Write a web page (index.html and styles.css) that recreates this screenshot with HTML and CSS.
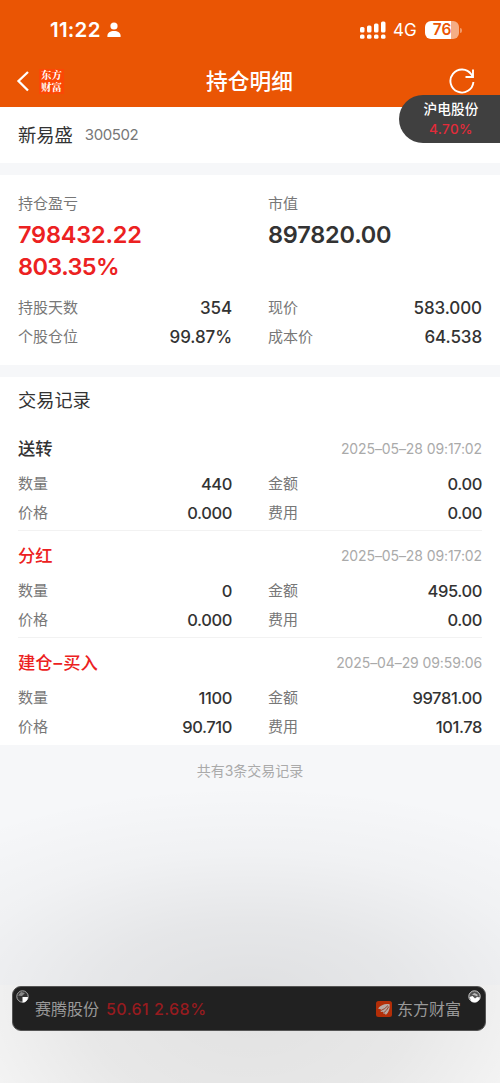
FILE: index.html
```html
<!DOCTYPE html>
<html lang="zh-CN">
<head>
<meta charset="utf-8">
<meta name="viewport" content="width=device-width, initial-scale=1">
<title>持仓明细</title>
<link rel="stylesheet" href="styles.css">
</head>
<body>
<div class="screen">
  <header class="header">
    <div class="status">
      <span class="time">11:22</span>
      <svg class="person" width="14" height="16" viewBox="0 0 14 16" fill="#fff"><circle cx="7" cy="4" r="3.6"/><path d="M.4 15v-1.3C.4 10.900 3.200 9 7 9s6.600 1.900 6.600 4.700V15z"/></svg>
      <svg class="signal" width="27" height="18" viewBox="0 0 27 18" fill="#fff"><rect x="0" y="6" width="4.500" height="5.500" rx="1.500"/><rect x="7" y="4.500" width="4.500" height="7" rx="1.500"/><rect x="14" y="2.500" width="4.500" height="9" rx="1.500"/><rect x="21" y=".5" width="4.500" height="11" rx="1.500"/><rect x="0" y="13.500" width="4.500" height="4.200" rx="1.500"/><rect x="7" y="13.500" width="4.500" height="4.200" rx="1.500"/><rect x="14" y="13.500" width="4.500" height="4.200" rx="1.500"/><rect x="21" y="13.500" width="4.500" height="4.200" rx="1.500"/></svg>
      <span class="network">4G</span>
      <span class="battery">76</span><span class="battery-tip"></span>
    </div>
    <nav class="nav">
      <svg class="back" width="14" height="22" viewBox="0 0 14 22" fill="none" stroke="#fff" stroke-width="2.300"><path d="M12 2 2.500 11 12 20.500"/></svg>
      <span class="brand">东方<br>财富</span>
      <h1 class="title">持仓明细</h1>
      <svg class="refresh" width="26" height="26" viewBox="0 0 26 26" fill="none" stroke="#fff" stroke-width="1.900"><path d="M24.400 14A11.500 11.500 0 1 1 22.400 6.500L24 9M24 1.500V9h-7.500"/></svg>
    </nav>
    <div class="float-quote"><span class="float-name">沪电股份</span><span class="float-pct">4.70%</span></div>
  </header>

  <section class="stock"><span class="stock-name">新易盛</span><span class="stock-code">300502</span></section>

  <section class="summary">
    <div class="totals">
      <div class="total rise"><span class="label">持仓盈亏</span><b>798432.22</b><b class="ratio">803.35%</b></div>
      <div class="total"><span class="label">市值</span><b>897820.00</b></div>
    </div>
    <div class="grid">
      <div class="pair"><span class="label">持股天数</span><span class="value">354</span></div>
      <div class="pair"><span class="label">现价</span><span class="value">583.000</span></div>
      <div class="pair"><span class="label">个股仓位</span><span class="value">99.87%</span></div>
      <div class="pair"><span class="label">成本价</span><span class="value">64.538</span></div>
    </div>
  </section>

  <section class="records">
    <h2 class="records-title">交易记录</h2>
    <article class="record">
      <div class="record-head"><span class="kind">送转</span><time>2025–05–28 09:17:02</time></div>
      <div class="grid">
        <div class="pair"><span class="label">数量</span><span class="value">440</span></div>
        <div class="pair"><span class="label">金额</span><span class="value">0.00</span></div>
        <div class="pair"><span class="label">价格</span><span class="value">0.000</span></div>
        <div class="pair"><span class="label">费用</span><span class="value">0.00</span></div>
      </div>
    </article>
    <article class="record">
      <div class="record-head"><span class="kind rise">分红</span><time>2025–05–28 09:17:02</time></div>
      <div class="grid">
        <div class="pair"><span class="label">数量</span><span class="value">0</span></div>
        <div class="pair"><span class="label">金额</span><span class="value">495.00</span></div>
        <div class="pair"><span class="label">价格</span><span class="value">0.000</span></div>
        <div class="pair"><span class="label">费用</span><span class="value">0.00</span></div>
      </div>
    </article>
    <article class="record">
      <div class="record-head"><span class="kind rise">建仓<span class="dash">–</span>买入</span><time>2025–04–29 09:59:06</time></div>
      <div class="grid">
        <div class="pair"><span class="label">数量</span><span class="value">1100</span></div>
        <div class="pair"><span class="label">金额</span><span class="value">99781.00</span></div>
        <div class="pair"><span class="label">价格</span><span class="value">90.710</span></div>
        <div class="pair"><span class="label">费用</span><span class="value">101.78</span></div>
      </div>
    </article>
  </section>

  <div class="empty"><p class="count">共有3条交易记录</p></div>

  <footer class="dock">
    <div class="ticker">
      <span class="ticker-name">赛腾股份</span><span class="ticker-quote">50.61 2.68%</span>
      <svg class="logo" width="16" height="16" viewBox="0 0 16 16"><rect width="16" height="16" rx="2.500" fill="#b32e08"/><path d="M2 7.500C5 3.500 9.500 2.200 13.600 3.200 14.200 7.500 12.500 11.500 9.800 14L9 12.500 7.500 13l-.3-2.300-2.500.3.300-2.500z" fill="#b9aaa4"/><path d="M5 9.500Q9 8 12 4.500M7.500 12Q11 9.500 12.800 5.500" stroke="#8d3a20" stroke-width=".9" fill="none"/></svg>
      <span class="ticker-name">东方财富</span>
      <svg class="screw screw-left" width="13" height="13" viewBox="0 0 13 13"><circle cx="6.500" cy="6.500" r="5.700" fill="#333" stroke="#aaa" stroke-width="1"/><path d="M6.500 7h5.500a5.500 5.500 0 0 1-5.500 5.500z" fill="#fff"/><path d="M2 5.500 5 2l4 1-3 3z" fill="#888"/></svg>
      <svg class="screw screw-right" width="13" height="13" viewBox="0 0 13 13"><circle cx="6.500" cy="6.500" r="5.700" fill="#555" stroke="#ccc" stroke-width="1"/><path d="M1.500 7 4.500 6 7 8.500 9 7l3 .5A5.500 5.500 0 0 1 3 11z" fill="#fff"/><path d="M4 4.500 6.500 3l3 1.500v2L7 5.500z" fill="#bbb"/></svg>
    </div>
  </footer>
</div>
</body>
</html>
```
FILE: styles.css
```css
* { box-sizing: border-box; }
body {
  margin: 0;
  font-family: Inter, "Noto Sans CJK SC", sans-serif;
  color: #333;
}
.screen {
  position: relative;
  display: flex;
  flex-direction: column;
  width: 500px;
  height: 1083px;
  overflow: hidden;
  background: #f6f7f9;
}
.header {
  position: relative;
  height: 107px;
  flex: none;
  background: #ea5504;
  color: #fff;
}
.status {
  display: flex;
  align-items: center;
  height: 60px;
  padding: 0 38px 0 50px;
}
.time { font-size: 20.500px; font-weight: 600; line-height: 24px; letter-spacing: .25px; }
.person { margin-left: 6px; }
.signal { margin-left: auto; }
.network { margin-left: 6px; width: 24px; font-size: 17px; line-height: 24px; }
.battery {
  margin-left: 8px;
  width: 34px;
  height: 18px;
  border-radius: 6px;
  background: linear-gradient(90deg, #fff 76%, #f5ad85 76%);
  color: #ea5504;
  font-size: 15.500px;
  font-weight: 600;
  line-height: 18px;
  text-align: center;
}
.battery-tip {
  width: 2px;
  height: 5px;
  margin-left: 1px;
  border-radius: 0 2px 2px 0;
  background: #f29a68;
}
.nav {
  display: grid;
  grid-template-columns: 23px 124px 1fr 139px;
  align-items: center;
  height: 42px;
  padding: 0 25px 0 16px;
}
.brand {
  width: 25px;
  height: 25px;
  background: #fb4705;
  font: 700 10.500px/12px "Noto Serif CJK SC", "Noto Sans CJK SC", serif;
  text-align: center;
}
.title {
  margin: 0;
  font-size: 21.700px;
  font-weight: 500;
  line-height: 30px;
  text-align: center;
  white-space: nowrap;
}
.refresh { justify-self: end; }
.float-quote {
  position: absolute;
  z-index: 2;
  top: 95px;
  right: 0;
  display: flex;
  flex-direction: column;
  align-items: center;
  width: 101px;
  height: 48px;
  padding: 4px 0 0 3px;
  border-radius: 24px 0 0 24px;
  background: #404040;
}
.float-name { font-size: 13.700px; font-weight: 500; line-height: 20px; }
.float-pct { font-size: 13.500px; font-weight: 500; line-height: 20px; letter-spacing: .4px; color: #e32b3a; }
.stock {
  display: flex;
  align-items: center;
  gap: 12px;
  height: 56px;
  padding: 0 18px;
  background: #fff;
}
.stock-name { font-size: 18.300px; line-height: 26px; }
.stock-code { font-size: 15px; line-height: 26px; color: #777; letter-spacing: -.4px; }
.summary {
  height: 190px;
  margin: 12px 0;
  padding: 16px 18px 0;
  background: #fff;
}
.totals, .grid { display: grid; grid-template-columns: 214px 214px; column-gap: 36px; }
.totals { height: 102px; }
.total { display: flex; flex-direction: column; }
.total b { font-size: 23.500px; font-weight: 600; line-height: 31.500px; letter-spacing: -.2px; }
.total .ratio { letter-spacing: -.6px; line-height: 31px; }
.total .label { line-height: 25px; margin-bottom: 3px; padding: 0; }
.rise { color: #ec2121; }
.label { padding-bottom: 2px; font-size: 15px; color: #777; }
.pair {
  display: flex;
  align-items: center;
  justify-content: space-between;
  height: 29px;
}
.value { font-size: 17px; font-weight: 500; letter-spacing: -.1px; }
.records {
  height: 368px;
  flex: none;
  background: #fff;
}
.records-title {
  margin: 0;
  height: 47px;
  padding: 0 18px;
  font-size: 18.200px;
  font-weight: 400;
  line-height: 47px;
}
.record {
  height: 107px;
  margin: 0 18px;
  padding-top: 12px;
  border-bottom: 1px solid #f2f2f2;
}
.record:last-child { border-bottom: 0; }
.record .value { font-size: 16.500px; letter-spacing: -.4px; }
.record-head {
  display: flex;
  align-items: center;
  justify-content: space-between;
  height: 24px;
  margin-bottom: 9px;
}
.kind { padding-bottom: 2px; font-size: 17.300px; font-weight: 500; }
.dash { letter-spacing: 1px; margin-left: 1px; }
.record-head time { font-size: 14px; letter-spacing: -.1px; color: #aaa; }
.empty {
  height: 240px;
  flex: none;
  background: radial-gradient(440px 210px at 250px 250px, rgba(0, 0, 0, .095), rgba(0, 0, 0, .065) 35%, rgba(0, 0, 0, .025) 68%, rgba(0, 0, 0, 0)), #f6f7f9;
}
.count {
  margin: 0;
  padding-top: 14px;
  font-size: 14px;
  line-height: 24px;
  text-align: center;
  color: #aaa;
}
.dock {
  flex: 1;
  padding: 1px 14px 0 12px;
  background: radial-gradient(310px 240px at 250px 0, rgba(0, 0, 0, .085), rgba(0, 0, 0, .06) 55%, rgba(0, 0, 0, 0)), #f6f6f6;
}
.ticker {
  position: relative;
  display: flex;
  align-items: center;
  height: 45px;
  padding: 0 24px 0 22px;
  border: 1px solid #555;
  border-radius: 9px;
  background: #212121;
}
.ticker-name { font-size: 16px; line-height: 24px; color: #999; }
.ticker-quote { margin-left: 7px; font-size: 16px; font-weight: 500; line-height: 24px; letter-spacing: .45px; color: #971b1f; }
.logo { margin-left: auto; margin-right: 5px; }
.screw { position: absolute; top: 3px; }
.screw-left { left: 3px; }
.screw-right { right: 4px; }
```
